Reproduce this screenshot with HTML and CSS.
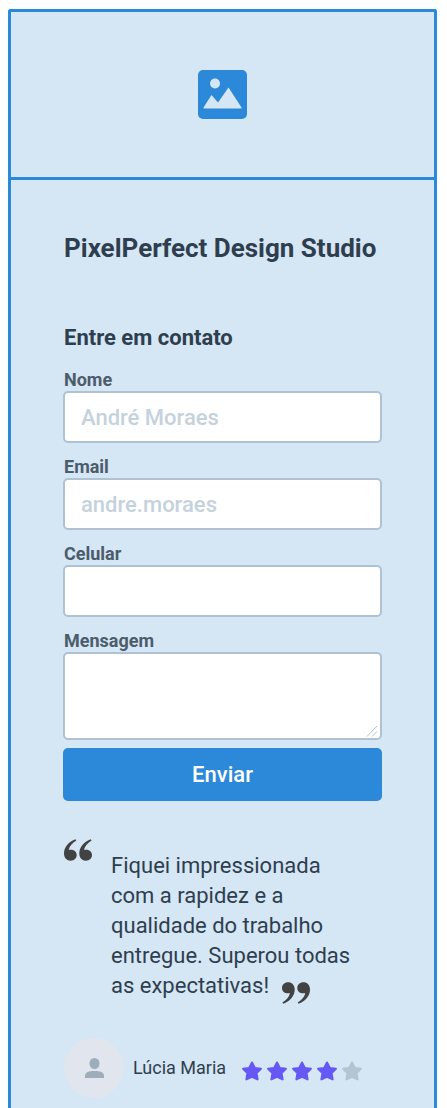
FILE: index.html
```html
<!DOCTYPE html>
<html lang="pt-BR">
<head>
<meta charset="utf-8">
<meta name="viewport" content="width=device-width, initial-scale=1">
<title>PixelPerfect Design Studio</title>
<link rel="stylesheet" href="styles.css">
</head>
<body>
<main class="card">
  <header class="cover">
    <svg class="cover-icon" viewBox="0 0 49 49" aria-hidden="true">
      <rect width="49" height="49" rx="5" fill="#2c88d9"/>
      <circle cx="17" cy="13.500" r="5" fill="#d5e6f5"/>
      <path d="M5.500 38.500V37.500L13.500 25l6.500 7.500L30.500 17.500 43.500 37.500v1z" fill="#d5e6f5"/>
    </svg>
  </header>
  <div class="content">
    <h1 class="title">PixelPerfect Design Studio</h1>
    <form class="form">
      <h2 class="form-title">Entre em contato</h2>
      <div class="field">
        <label class="label" for="nome">Nome</label>
        <input class="control" id="nome" type="text" placeholder="André Moraes">
      </div>
      <div class="field">
        <label class="label" for="email">Email</label>
        <input class="control" id="email" type="text" placeholder="andre.moraes">
      </div>
      <div class="field">
        <label class="label" for="celular">Celular</label>
        <input class="control" id="celular" type="tel">
      </div>
      <div class="field">
        <label class="label" for="mensagem">Mensagem</label>
        <div class="area">
          <textarea class="control control-area" id="mensagem"></textarea>
          <svg class="grip" viewBox="0 0 12 12" aria-hidden="true"><path d="M1 11.500 11 1M6 11.500 11 6.500" fill="none" stroke="#b2c3d2" stroke-width="1"/></svg>
        </div>
      </div>
      <button class="submit" type="button">Enviar</button>
    </form>
    <figure class="review">
      <div class="quote">
        <svg class="mark" viewBox="0 0 28 22" aria-hidden="true">
          <path id="curl" d="M11.500 0.300C5 2.500 0 8 0 14.500 0 19 2.800 21.700 6.600 21.700c3.600 0 6.100-2.500 6.100-5.600 0-3.200-2.500-5.400-5.700-5.400-.9 0-1.700.1-2.300.4C5.400 7.300 8.300 3.800 12.300 1.600z" fill="#424242"/>
          <use href="#curl" x="15.300"/>
        </svg>
        <blockquote class="quote-text">Fiquei impressionada<br>com a rapidez e a<br>qualidade do trabalho<br>entregue. Superou todas<br>as expectativas!<svg class="mark mark-end" viewBox="0 0 28 22" aria-hidden="true"><g transform="rotate(180 14 11)"><use href="#curl"/><use href="#curl" x="15.300"/></g></svg></blockquote>
      </div>
      <figcaption class="author">
        <span class="avatar">
          <svg class="person" viewBox="0 0 19 20" aria-hidden="true"><ellipse cx="9.500" cy="5.500" rx="5" ry="5.500" fill="#9eadba"/><path d="M0 20v-2.500C0 14.300 4 13 9.500 13S19 14.300 19 17.500V20z" fill="#9eadba"/></svg>
        </span>
        <span class="name">Lúcia Maria</span>
        <span class="stars" role="img" aria-label="4 de 5 estrelas">
          <svg class="star" viewBox="0 0 20 20"><path id="star" d="M10 1.500l2.900 5.400 6 .9-4.300 4.300 1 6.300L10 15.900l-5.600 2.500 1-6.300L1.100 7.800l6-.9z" fill="currentColor" stroke="currentColor" stroke-width="2" stroke-linejoin="round"/></svg>
          <svg class="star" viewBox="0 0 20 20"><use href="#star"/></svg>
          <svg class="star" viewBox="0 0 20 20"><use href="#star"/></svg>
          <svg class="star" viewBox="0 0 20 20"><use href="#star"/></svg>
          <svg class="star star-off" viewBox="0 0 20 20"><use href="#star"/></svg>
        </span>
      </figcaption>
    </figure>
  </div>
</main>
</body>
</html>
```
FILE: styles.css
```css
* { box-sizing: border-box; }
body {
  margin: 0;
  padding: 9px 10px 0 8px;
  background: #fff;
  color: #2e3e4e;
  font-family: Roboto, "Liberation Sans", sans-serif;
}
.card {
  min-height: calc(100vh - 9px);
  border: 3px solid #2c88d9;
  border-bottom: 0;
  border-radius: 3px 3px 0 0;
  background: #d5e6f5;
}
.cover {
  display: flex;
  justify-content: center;
  padding: 58px 0;
  border-bottom: 3px solid #2c88d9;
}
.cover-icon { width: 49px; height: 49px; }
.content { padding: 52px 52px 8px; }
.title {
  margin: 0 0 60px;
  padding-left: 1px;
  font-size: 26px;
  line-height: 32px;
  font-weight: 700;
  white-space: nowrap;
}
.form {
  display: flex;
  flex-direction: column;
  gap: 12px;
}
.form-title {
  margin: 0 0 4px;
  padding-left: 1px;
  font-size: 22px;
  line-height: 28px;
  font-weight: 700;
}
.field { display: flex; flex-direction: column; }
.label {
  padding-left: 1px;
  color: #4b5c6b;
  font-size: 18px;
  line-height: 23px;
  font-weight: 700;
}
.control {
  display: block;
  width: 100%;
  height: 52px;
  padding: 0 16px;
  border: 2px solid #afc2d3;
  border-radius: 5px;
  background: #fff;
  color: #2e3e4e;
  font: 500 22px/28px Roboto, "Liberation Sans", sans-serif;
}
.control::placeholder { color: #c5d2dd; opacity: 1; }
.area { position: relative; }
.control-area { height: 88px; padding: 10px 16px; resize: none; }
.grip {
  position: absolute;
  right: 4px;
  bottom: 3px;
  width: 12px;
  height: 12px;
  pointer-events: none;
}
.submit {
  height: 53px;
  margin-top: -4px;
  border: 0;
  border-radius: 5px;
  background: #2c88d9;
  color: #fff;
  font: 500 22px/28px Roboto, "Liberation Sans", sans-serif;
}
.review { margin: 38px 0 0; }
.quote { display: flex; gap: 19px; padding-left: 1px; }
.mark { flex: none; width: 28px; height: 22px; }
.quote-text {
  margin: 0;
  padding-top: 12px;
  font-size: 22px;
  line-height: 30px;
  white-space: nowrap;
}
.mark-end { margin-left: 13px; vertical-align: -11px; }
.author {
  display: flex;
  align-items: center;
  margin-top: 34px;
  padding-left: 1px;
}
.avatar {
  display: flex;
  align-items: center;
  justify-content: center;
  flex: none;
  width: 60px;
  height: 60px;
  border-radius: 50%;
  background: #e1e5ed;
}
.person { width: 19px; height: 20px; }
.name { margin-left: 9px; font-size: 18px; line-height: 24px; white-space: nowrap; }
.stars { display: flex; gap: 5px; margin: 6px 0 0 16px; color: #6558f5; }
.star { width: 20px; height: 20px; }
.star-off { color: #b3c4d2; }
```
